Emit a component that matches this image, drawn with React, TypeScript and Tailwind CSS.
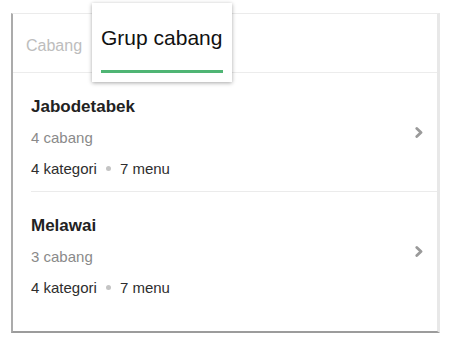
import React from "react";

function Chevron() {
  return (
    <svg width="8" height="11" viewBox="0 0 8 11" fill="none">
      <path d="M1.8 1.5 L6 5.5 L1.8 9.5" stroke="#9a9a9a" strokeWidth="2.8" strokeLinecap="round" strokeLinejoin="round" />
    </svg>
  );
}

function Item({ title, sub, last }: { title: string; sub: string; last?: boolean }) {
  return (
    <div className={`ml-[18px] flex h-[119px] items-stretch pr-[14px] ${last ? "" : "border-b border-[#ebebeb]"}`}>
      <div className="flex-1 pt-[18px] leading-[31px]">
        <div className="text-[17px] font-bold text-[#222]">{title}</div>
        <div className="text-[15px] text-[#8a8a8a]">{sub}</div>
        <div className="flex items-center text-[15px] text-[#2e2e2e]">
          <span>4 kategori</span>
          <span className="mx-[9px] inline-block h-[5px] w-[5px] rounded-full bg-[#c4c4c4]" />
          <span>7 menu</span>
        </div>
      </div>
      <div className="flex items-center">
        <Chevron />
      </div>
    </div>
  );
}

export default function App() {
  return (
    <div
      className="h-[340px] w-[451px] bg-white pl-[11px] pt-[13px]"
      style={{ fontFamily: '"Liberation Sans", Arial, sans-serif' }}
    >
      <div className="relative box-border h-[320px] w-[429px] border-b-2 border-l-2 border-r-[3px] border-t border-b-[#9c9c9c] border-l-[#ababab] border-r-[#e8e8e8] border-t-[#ebebeb] bg-white">
        <div className="flex h-[59px] items-center border-b border-[#ececec] pl-[13px] pt-[6px]">
          <span className="text-[16px] text-[#bdbdbd]">Cabang</span>
        </div>
        <div className="absolute left-[79px] top-[-11px] h-[79px] w-[140px] bg-white shadow-[0_1px_4px_rgba(0,0,0,0.35)]">
          <div className="pl-[9px] pt-[21px] text-[21px] leading-[28px] text-[#111]">Grup cabang</div>
          <div className="absolute left-[9px] top-[67px] h-[3px] w-[122px] bg-[#4fb574]" />
        </div>
        <Item title="Jabodetabek" sub="4 cabang" />
        <Item title="Melawai" sub="3 cabang" last />
      </div>
    </div>
  );
}
